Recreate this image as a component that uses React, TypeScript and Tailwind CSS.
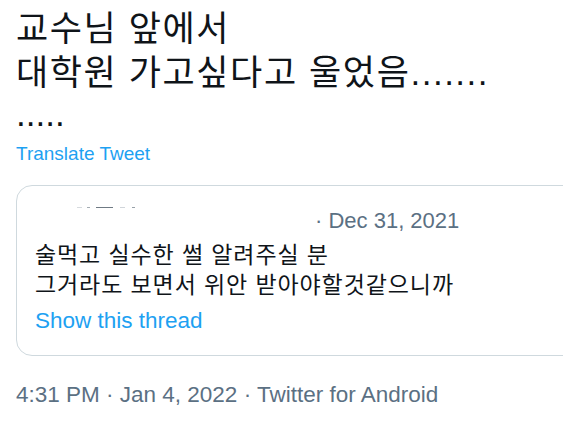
import React from "react";

const latin = { fontFamily: '"Liberation Sans", "Noto Sans CJK KR", Arial, sans-serif' };

export default function App() {
  return (
    <div className="w-[563px] h-[423px] overflow-hidden bg-white" style={latin}>
      <div className="pl-[16px] pt-[7px]">
        <div className="text-[35px] leading-[44px] tracking-[1.6px] text-[#0f1419]">
          교수님 앞에서
          <br />
          대학원 가고싶다고 울었음<span className="tracking-[1.5px]">.......</span>
        </div>
        <div className="text-[35px] leading-[38px] text-[#0f1419]">.....</div>
        <div className="mt-[9px] text-[19px] leading-[24px] text-[#1da1f2]">Translate Tweet</div>
        <div className="mt-[19px] w-[600px] h-[171px] rounded-[16px] border border-[#cfd9de] pl-[18px] pt-[12px]">
          <div className="relative h-[36px] flex items-end">
            <div className="absolute left-[42px] top-[9px] flex items-center">
              <span className="block w-[5px] h-[1px] bg-[#d6dade]" />
              <span className="block ml-[5px] w-[3px] h-[1px] bg-[#a4acb3]" />
              <span className="block ml-[6px] w-[17px] h-[1px] bg-[#6f7a84]" />
              <span className="block ml-[7px] w-[5px] h-[1px] bg-[#d0d5da]" />
              <span className="block ml-[7px] w-[3px] h-[1px] bg-[#98a1a9]" />
            </div>
            <span className="ml-[280px] text-[22px] leading-[26px] text-[#5b7083]">· Dec 31, 2021</span>
          </div>
          <div className="mt-[6px] text-[23px] leading-[30px] tracking-[0.9px] text-[#0f1419]">
            술먹고 실수한 썰 알려주실 분
            <br />
            그거라도 보면서 위안 받아야할것같으니까
          </div>
          <div className="mt-[8px] text-[22.5px] leading-[26px] text-[#1da1f2]">Show this thread</div>
        </div>
        <div className="mt-[26px] text-[22.5px] leading-[26px] text-[#5b7083]">
          4:31 PM · Jan 4, 2022 · Twitter for Android
        </div>
      </div>
    </div>
  );
}
